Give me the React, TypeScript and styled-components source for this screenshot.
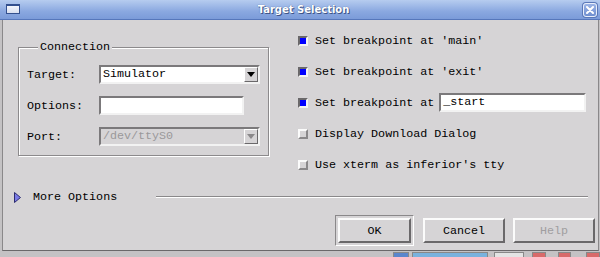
import styled, { createGlobalStyle } from 'styled-components';

const GlobalStyle = createGlobalStyle`
  html, body {
    margin: 0;
    padding: 0;
    background: #c4c2c4;
  }
  body {
    font-family: "Liberation Mono", "DejaVu Sans Mono", monospace;
  }
`;

const checks = [
  { label: "Set breakpoint at 'main'", checked: true },
  { label: "Set breakpoint at 'exit'", checked: true },
  { label: 'Set breakpoint at', checked: true, input: '_start' },
  { label: 'Display Download Dialog', checked: false },
  { label: "Use xterm as inferior's tty", checked: false },
];

const taskItems = [
  { left: 393, width: 15, color: '#5b86cc' },
  { left: 3, width: 80, color: '#7ab2de' },
  { left: 6, width: 30, color: '#e4e4e4' },
  { left: 8, width: 13, color: '#d86a6a' },
  { left: 12, width: 12, color: '#d86a6a' },
  { left: 15, width: 13, color: '#d86a6a' },
];

const App = () => {
  return (
    <>
      <GlobalStyle />
      <Window>
        <TitleBar>
          <WindowIcon />
          <Title>Target Selection</Title>
          <CloseButton>
            <svg width="8" height="8" viewBox="0 0 8 8">
              <path d="M1 1 L7 7 M7 1 L1 7" stroke="#fff" strokeWidth="2" strokeLinecap="round" />
            </svg>
          </CloseButton>
        </TitleBar>
        <Body>
          <TopRow>
            <GroupBox>
              <Legend>Connection</Legend>
              <FormGrid>
                <Label>Target:</Label>
                <Combo $width={161}>
                  <ComboText>Simulator</ComboText>
                  <ArrowButton>
                    <Arrow />
                  </ArrowButton>
                </Combo>
                <Label>Options:</Label>
                <TextField $width={145} />
                <Label>Port:</Label>
                <Combo $width={161} $disabled>
                  <ComboText $disabled>/dev/ttyS0</ComboText>
                  <ArrowButton>
                    <Arrow $disabled />
                  </ArrowButton>
                </Combo>
              </FormGrid>
            </GroupBox>
            <CheckList>
              {checks.map((c) => (
                <CheckRow key={c.label}>
                  <CheckBox $checked={c.checked} />
                  <CheckLabel>{c.label}</CheckLabel>
                  {c.input && <BreakField>{c.input}</BreakField>}
                </CheckRow>
              ))}
            </CheckList>
          </TopRow>
          <MoreRow>
            <svg width="7" height="11" viewBox="0 0 7 11">
              <polygon points="0.5,0.5 6.5,5.5 0.5,10.5" fill="#7a7ae6" stroke="#2c2c70" strokeWidth="1" />
            </svg>
            <MoreLabel>More Options</MoreLabel>
            <Separator />
          </MoreRow>
          <ButtonRow>
            <DefaultFrame>
              <Button $width={73}>OK</Button>
            </DefaultFrame>
            <Button $width={82}>Cancel</Button>
            <Button $width={82} $disabled>
              Help
            </Button>
          </ButtonRow>
        </Body>
        <Taskbar>
          {taskItems.map((t, i) => (
            <TaskItem key={i} $left={t.left} $width={t.width} $color={t.color} />
          ))}
        </Taskbar>
      </Window>
    </>
  );
};

export default App;

const Window = styled.div`
  width: 600px;
  height: 257px;
  display: flex;
  flex-direction: column;
  background: #c4c2c4;
  overflow: hidden;
`;

const TitleBar = styled.div`
  height: 19px;
  display: flex;
  align-items: center;
  padding: 0 3px 0 6px;
  background: linear-gradient(#b6ccef, #8aa8e0 60%, #7b9bd9);
  border-bottom: 1px solid #5677bb;
`;

const WindowIcon = styled.div`
  width: 14px;
  height: 10px;
  box-sizing: border-box;
  margin-top: -1px;
  border: 1px solid #33508e;
  border-top-width: 2px;
  background: linear-gradient(#f4f6fb, #d8dff0);
`;

const Title = styled.div`
  flex: 1;
  text-align: center;
  font-family: "DejaVu Sans", sans-serif;
  font-weight: bold;
  font-size: 10px;
  color: #fff;
  text-shadow: 1px 1px 0 #3d5488, 0 0 1px #3d5488;
  padding-left: 4px;
`;

const CloseButton = styled.div`
  width: 14px;
  height: 14px;
  box-sizing: border-box;
  border: 1px solid #e8eefa;
  border-radius: 3px;
  background: linear-gradient(#9bb4e6, #6f8fd0);
  display: flex;
  align-items: center;
  justify-content: center;
  box-shadow: 0 0 0 1px #5a78b8;
`;

const Body = styled.div`
  height: 231px;
  box-sizing: border-box;
  margin: 0 1px 0 2px;
  background: #d6d4d6;
  border-left: 1px solid #8a888a;
  border-right: 1px solid #8a888a;
  border-bottom: 1px solid #6a686a;
  display: flex;
  flex-direction: column;
  font-size: 11.7px;
  color: #000;
`;

const TopRow = styled.div`
  display: flex;
  align-items: flex-start;
  padding-left: 15px;
  height: 160px;
`;

const GroupBox = styled.div`
  position: relative;
  margin-top: 27px;
  width: 251px;
  height: 109px;
  box-sizing: border-box;
  border: 1px solid #8c8a8c;
  box-shadow: 1px 1px 0 #fff, inset 1px 1px 0 #fff;
  padding: 17px 0 0 8px;
`;

const Legend = styled.span`
  position: absolute;
  top: -8px;
  left: 19px;
  padding: 0 2px;
  line-height: 14px;
  background: #d6d4d6;
`;

const FormGrid = styled.div`
  display: grid;
  grid-template-columns: 72px auto;
  grid-template-rows: repeat(3, 19px);
  row-gap: 12px;
  align-items: center;
  justify-items: start;
`;

const Label = styled.span`
  line-height: 14px;
`;

const sunken = `
  box-sizing: border-box;
  border-style: solid;
  border-width: 2px;
  border-color: #7b797b #f2f2f2 #f2f2f2 #7b797b;
`;

const Combo = styled.div<{ $width: number; $disabled?: boolean }>`
  ${sunken}
  display: flex;
  width: ${(p) => p.$width}px;
  height: 19px;
  background: ${(p) => (p.$disabled ? '#d6d4d6' : '#fff')};
`;

const ComboText = styled.span<{ $disabled?: boolean }>`
  flex: 1;
  padding-left: 2px;
  line-height: 15px;
  color: ${(p) => (p.$disabled ? '#9a989a' : '#000')};
`;

const ArrowButton = styled.div`
  width: 14px;
  height: 15px;
  box-sizing: border-box;
  border: 1px solid;
  border-color: #fff #6a686a #6a686a #fff;
  background: #d6d4d6;
  display: flex;
  align-items: center;
  justify-content: center;
`;

const Arrow = styled.div<{ $disabled?: boolean }>`
  width: 0;
  height: 0;
  border-left: 4px solid transparent;
  border-right: 4px solid transparent;
  border-top: 5px solid ${(p) => (p.$disabled ? '#8a888a' : '#000')};
`;

const TextField = styled.div<{ $width: number }>`
  ${sunken}
  width: ${(p) => p.$width}px;
  height: 19px;
  background: #fff;
`;

const CheckList = styled.div`
  display: flex;
  flex-direction: column;
  margin: 5px 0 0 29px;
`;

const CheckRow = styled.div`
  display: flex;
  align-items: center;
  height: 31px;
`;

const CheckBox = styled.div<{ $checked: boolean }>`
  width: 10px;
  height: 10px;
  box-sizing: border-box;
  border: 2px solid;
  border-color: ${(p) =>
    p.$checked ? '#6a686a #f4f4f4 #f4f4f4 #6a686a' : '#fbfbfb #8a888a #8a888a #fbfbfb'};
  background: ${(p) => (p.$checked ? '#0000ff' : '#d6d4d6')};
  margin-right: 7px;
`;

const CheckLabel = styled.span`
  line-height: 14px;
  white-space: pre;
`;

const BreakField = styled.div`
  ${sunken}
  width: 147px;
  height: 19px;
  margin-left: 5px;
  background: #fff;
  padding-left: 2px;
  line-height: 15px;
`;

const MoreRow = styled.div`
  display: flex;
  align-items: center;
  height: 14px;
  margin-top: 10px;
  padding: 0 10px 0 11px;
`;

const MoreLabel = styled.span`
  margin-left: 12px;
  line-height: 14px;
`;

const Separator = styled.div`
  flex: 1;
  margin-left: 39px;
  border-top: 1px solid #8a888a;
  border-bottom: 1px solid #fff;
`;

const ButtonRow = styled.div`
  display: flex;
  justify-content: flex-end;
  align-items: center;
  gap: 8px;
  margin-top: 11px;
  padding-right: 3px;
`;

const DefaultFrame = styled.div`
  padding: 2px;
  border: 1px solid;
  border-color: #8a888a #fff #fff #8a888a;
  margin-right: 1px;
  display: flex;
`;

const Button = styled.button<{ $width: number; $disabled?: boolean }>`
  width: ${(p) => p.$width}px;
  height: 25px;
  box-sizing: border-box;
  border: 2px solid;
  border-color: #fbfbfb #6a686a #6a686a #fbfbfb;
  background: #d6d4d6;
  font-family: "Liberation Mono", "DejaVu Sans Mono", monospace;
  font-size: 11.7px;
  color: ${(p) => (p.$disabled ? '#a09ea0' : '#000')};
  padding: 0;
`;

const Taskbar = styled.div`
  flex: 1;
  display: flex;
  align-items: stretch;
  padding-top: 1px;
`;

const TaskItem = styled.div<{ $left: number; $width: number; $color: string }>`
  margin-left: ${(p) => p.$left}px;
  width: ${(p) => p.$width}px;
  background: ${(p) => p.$color};
  border: 1px solid #888;
  border-bottom: none;
`;
